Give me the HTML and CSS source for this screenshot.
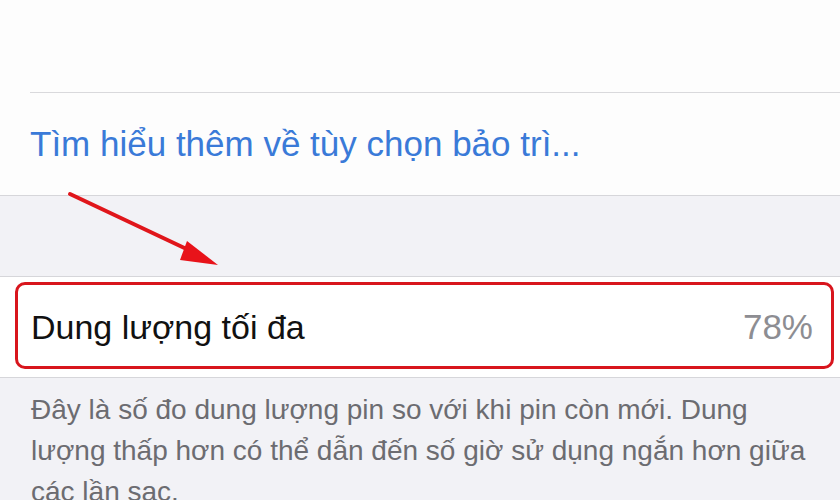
FILE: index.html
```html
<!DOCTYPE html>
<html lang="vi">
<head>
    <meta charset="UTF-8">
    <meta name="viewport" content="width=device-width, initial-scale=1.0">
    <title>Tình trạng pin</title>
    <link rel="stylesheet" href="styles.css">
</head>
<body>

<div class="screen">
    <!-- Phần trên: khoảng trống + liên kết -->
    <div class="group">
        <div class="blank"></div>
        <div class="row link-row">
            <a href="#" class="link">Tìm hiểu thêm về tùy chọn bảo trì...</a>
        </div>
    </div>

    <div class="spacer"></div>

    <!-- Dung lượng tối đa -->
    <div class="group">
        <div class="row capacity-row">
            <span class="label">Dung lượng tối đa</span>
            <span class="value">78%</span>
            <div class="highlight"></div>
        </div>
    </div>

    <p class="footnote">Đây là số đo dung lượng pin so với khi pin còn mới. Dung lượng thấp hơn có thể dẫn đến số giờ sử dụng ngắn hơn giữa các lần sạc.</p>

    <!-- Mũi tên chú thích -->
    <svg class="arrow" width="840" height="500" viewBox="0 0 840 500">
        <line x1="70" y1="194" x2="195" y2="253" stroke="#e0161b" stroke-width="4" stroke-linecap="round"/>
        <polygon points="187,241 218,265 180,260" fill="#e8131a"/>
    </svg>
</div>

</body>
</html>
```

FILE: styles.css
```css
body {
    margin: 0;
    font-family: "Liberation Sans", Arial, sans-serif;
    background-color: #f2f2f6;
}
.screen {
    position: relative;
    width: 840px;
    height: 500px;
    overflow: hidden;
}
.group {
    background-color: #fdfdfd;
    border-bottom: 1px solid #d6d6da;
}
.blank {
    height: 92px;
    margin-left: 30px;
    border-bottom: 1px solid #d9d9dc;
}
.row {
    display: flex;
    align-items: center;
    justify-content: space-between;
    padding: 0 27px 0 31px;
    font-size: 35px;
}
.link-row {
    height: 102px;
    padding-left: 30px;
}
.link {
    color: #3a7ad8;
    text-decoration: none;
}
.spacer {
    height: 80px;
    border-bottom: 1px solid #d6d6da;
}
.capacity-row {
    position: relative;
    height: 100px;
    background-color: #fff;
}
.label {
    color: #111;
    font-size: 34px;
}
.value {
    color: #8d8d92;
}
.highlight {
    position: absolute;
    left: 15px;
    right: 6px;
    top: 5px;
    bottom: 8px;
    border: 3px solid #d8151d;
    border-radius: 10px;
}
.footnote {
    margin: 0;
    padding: 11px 15px 0 31px;
    font-size: 28px;
    line-height: 41px;
    color: #6c6c71;
}
.arrow {
    position: absolute;
    left: 0;
    top: 0;
    pointer-events: none;
}
```
